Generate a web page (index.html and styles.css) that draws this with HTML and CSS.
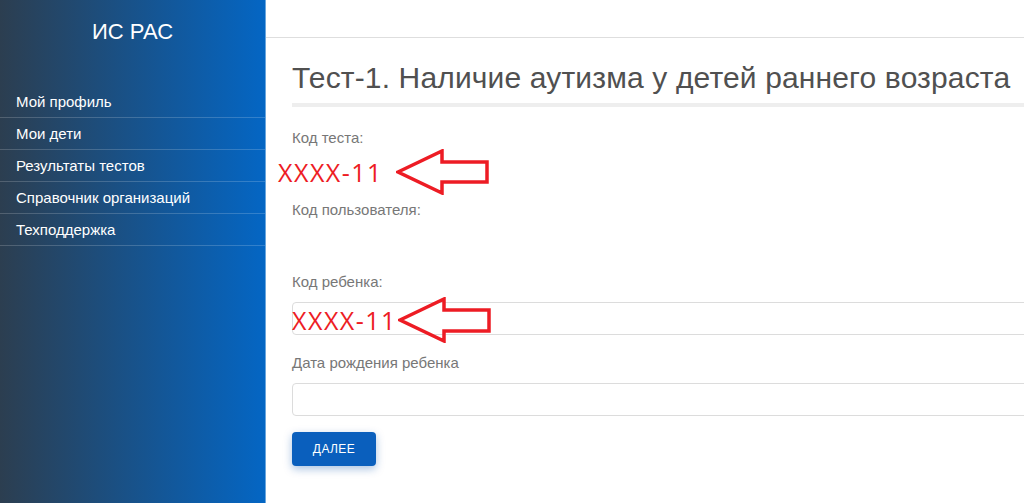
FILE: index.html
```html
<!DOCTYPE html>
<html lang="ru">
<head>
    <meta charset="utf-8">
    <meta name="viewport" content="width=device-width, initial-scale=1.0">
    <title>Тест-1 - ИС РАС</title>
    <link rel="stylesheet" href="styles.css">
</head>
<body>

<div class="layout">
    <aside class="sidebar">
        <div class="brand">ИС РАС</div>
        <nav class="menu">
            <a href="#">Мой профиль</a>
            <a href="#">Мои дети</a>
            <a href="#">Результаты тестов</a>
            <a href="#">Справочник организаций</a>
            <a href="#">Техподдержка</a>
        </nav>
    </aside>

    <main class="main">
        <div class="topbar"></div>

        <div class="content">
            <h1 class="title">Тест-1. Наличие аутизма у детей раннего возраста</h1>

            <form class="form" onsubmit="return false">
                <div class="field field-info">
                    <label>Код теста:</label>
                    <div class="value"></div>
                    <div class="note note-test">
                        <span class="note-text">XXXX-11</span>
                        <svg class="arrow" width="94" height="46" viewBox="0 0 94 46">
                            <polygon points="2,23 46,2 46,13 91,13 91,33 46,33 46,44" />
                        </svg>
                    </div>
                </div>

                <div class="field field-info">
                    <label>Код пользователя:</label>
                    <div class="value"></div>
                </div>

                <div class="field">
                    <label for="child">Код ребенка:</label>
                    <input type="text" id="child">
                    <div class="note note-child">
                        <span class="note-text">XXXX-11</span>
                        <svg class="arrow" width="94" height="46" viewBox="0 0 94 46">
                            <polygon points="2,23 46,2 46,13 91,13 91,34 46,34 46,44" />
                        </svg>
                    </div>
                </div>

                <div class="field">
                    <label for="birth">Дата рождения ребенка</label>
                    <input type="text" id="birth">
                </div>

                <button type="submit" class="next-btn">ДАЛЕЕ</button>
            </form>
        </div>
    </main>
</div>

</body>
</html>
```

FILE: styles.css
```css
* {
    margin: 0;
    padding: 0;
    box-sizing: border-box;
}
html, body {
    height: 100%;
}
body {
    background: white;
    font-family: "Liberation Sans", Arial, sans-serif;
    overflow: hidden;
}
.layout {
    display: flex;
    height: 100%;
}
.sidebar {
    width: 266px;
    flex-shrink: 0;
    background: linear-gradient(to right, #2c3e50, #0466c4);
    border-right: 1px solid #6aa6dd;
    color: white;
}
.brand {
    padding-top: 19px;
    font-size: 22px;
    line-height: 26px;
    text-align: center;
}
.menu {
    margin-top: 41px;
}
.menu a {
    display: block;
    padding: 7px 16px;
    line-height: 17px;
    font-size: 15px;
    color: white;
    text-decoration: none;
    border-bottom: 1px solid rgba(255, 255, 255, 0.18);
}
.menu a:hover {
    background: rgba(255, 255, 255, 0.08);
}
.main {
    flex: 1;
    min-width: 0;
    overflow: hidden;
}
.topbar {
    height: 38px;
    border-bottom: 1px solid #dedede;
}
.content {
    width: 780px;
    padding: 24px 0 0 26px;
}
.title {
    font-size: 30px;
    font-weight: normal;
    line-height: 32px;
    letter-spacing: 0.15px;
    color: #505050;
    padding-bottom: 9px;
    border-bottom: 4px solid #eeeeee;
    white-space: nowrap;
}
.form {
    margin-top: 21px;
}
.field {
    position: relative;
    margin-bottom: 18px;
}
.field-info {
    margin-bottom: 16px;
}
label {
    display: block;
    font-size: 15px;
    line-height: 20px;
    color: #777;
}
.field input {
    display: block;
    margin-top: 10px;
    width: 100%;
    height: 33px;
    padding: 6px 12px;
    border: 1px solid #dcdcdc;
    border-radius: 4px;
    font-size: 15px;
}
.value {
    height: 36px;
}
.note {
    position: absolute;
    display: flex;
    align-items: center;
    color: #ed1c24;
}
.note-text {
    font-family: "Open Sans", sans-serif;
    font-size: 25px;
    line-height: 30px;
    letter-spacing: 1.5px;
}
.note-test {
    left: -14px;
    top: 21px;
}
.note-test .arrow {
    margin-left: 13px;
}
.note-child {
    left: 0;
    top: 25px;
}
.note-child .arrow {
    margin-left: 1px;
}
.arrow polygon {
    fill: none;
    stroke: #ed1c24;
    stroke-width: 3.5;
}
.next-btn {
    margin-top: -2px;
    width: 84px;
    height: 34px;
    background: #0a5fbd;
    color: white;
    border: none;
    border-radius: 4px;
    font-family: "Liberation Sans", Arial, sans-serif;
    font-size: 12px;
    letter-spacing: 0.4px;
    box-shadow: 0 3px 8px rgba(10, 80, 170, 0.35);
    cursor: pointer;
}
.next-btn:hover {
    background: #084f9e;
}
```
